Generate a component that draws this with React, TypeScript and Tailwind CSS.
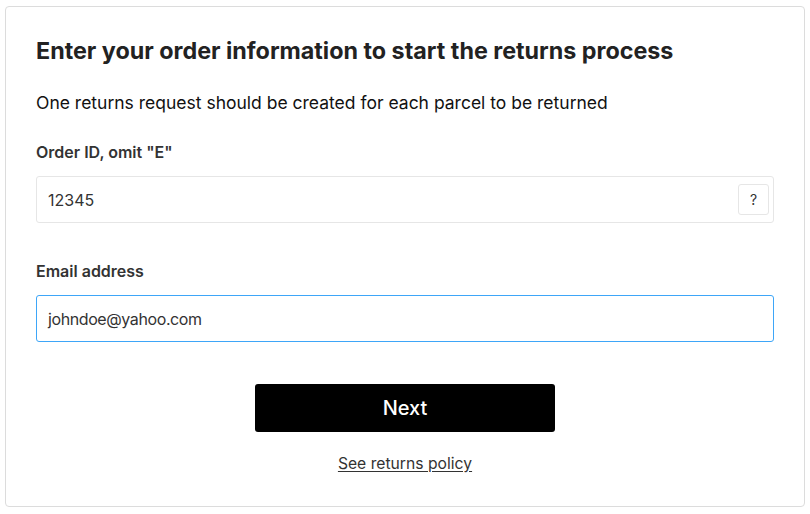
import React from "react";

export default function App() {
  return (
    <div className="w-[810px] h-[514px] bg-white pt-[6px] pl-[5px]" style={{ fontFamily: "Inter, 'Noto Sans', sans-serif" }}>
      <div className="w-[800px] h-[501px] border border-[#dcdcdc] rounded-[4px] px-[30px] pt-[30px] flex flex-col">
        <h1 className="text-[23.3px] leading-[28px] font-bold text-[#222]">Enter your order information to start the returns process</h1>
        <p className="mt-[26px] text-[17.5px] leading-[24px] text-[#111]">One returns request should be created for each parcel to be returned</p>
        <label className="mt-[27px] text-[16px] leading-[20px] font-semibold text-[#333]">Order ID, omit "E"</label>
        <div className="mt-[14px] h-[47px] border border-[#e6e6e6] rounded-[3px] flex items-center justify-between pl-[11px] pr-[4px]">
          <span className="text-[16px] text-[#333]">12345</span>
          <span className="w-[31px] h-[31px] border border-[#e6e6e6] rounded-[3px] flex items-center justify-center text-[14px] text-[#333]">?</span>
        </div>
        <label className="mt-[38px] text-[16px] leading-[20px] font-semibold text-[#333]">Email address</label>
        <div className="mt-[14px] h-[47px] border border-[#3ea6f8] rounded-[3px] flex items-center pl-[11px]">
          <span className="text-[16px] text-[#333] tracking-[-0.4px]">johndoe@yahoo.com</span>
        </div>
        <div className="mt-[42px] flex justify-center">
          <button className="w-[300px] h-[48px] bg-black rounded-[3px] text-white text-[20px] font-medium">Next</button>
        </div>
        <div className="mt-[20px] flex justify-center">
          <a className="text-[15.7px] text-[#333] underline underline-offset-2">See returns policy</a>
        </div>
      </div>
    </div>
  );
}
